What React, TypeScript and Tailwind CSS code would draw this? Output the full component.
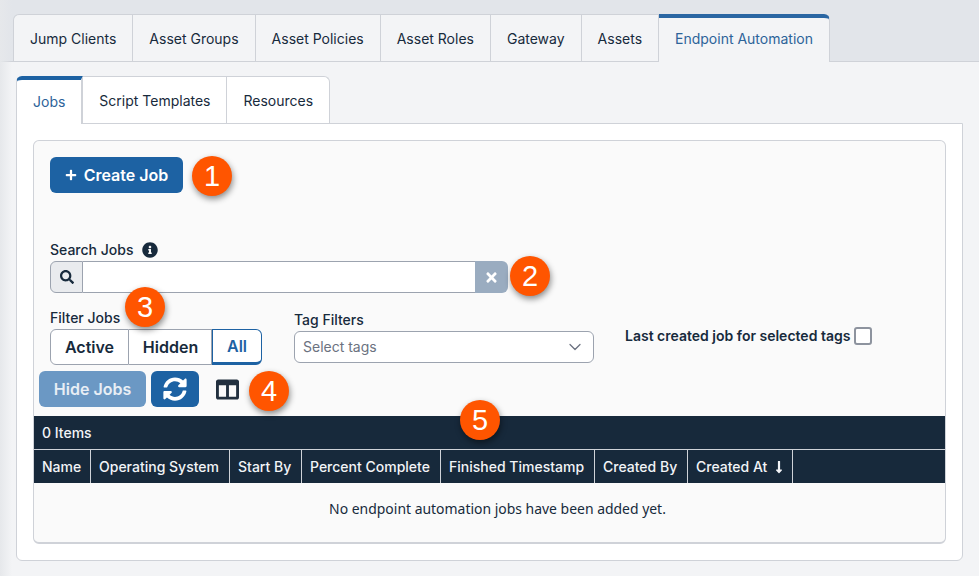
import { ChevronDown } from "lucide-react";
import { FaColumns, FaInfoCircle, FaLongArrowAltDown, FaPlus, FaSearch, FaSyncAlt, FaTimes } from "react-icons/fa";

const TOP_TABS = ["Jump Clients", "Asset Groups", "Asset Policies", "Asset Roles", "Gateway", "Assets"];
const COLUMNS = [
  { label: "Name", width: "w-[57px]" },
  { label: "Operating System", width: "w-[139px]" },
  { label: "Start By", width: "w-[72px]" },
  { label: "Percent Complete", width: "w-[139px]" },
  { label: "Finished Timestamp", width: "w-[154px]" },
  { label: "Created By", width: "w-[93px]" },
];

function Badge({ value, className }: { value: number; className: string }) {
  return (
    <div
      className={`absolute flex h-10 w-10 items-center justify-center rounded-full bg-[#ff5500] text-[29px] leading-none text-white shadow-[1px_3px_6px_rgba(0,0,0,0.45)] ${className}`}
      style={{ fontFamily: '"Liberation Sans", sans-serif' }}
    >
      {value}
    </div>
  );
}

export default function App() {
  return (
    <div
      className="relative h-[576px] w-[979px] overflow-hidden bg-[#f3f4f6] text-[14px] text-[#172a3c]"
      style={{ fontFamily: 'Inter, "Liberation Sans", sans-serif' }}
    >
      <div className="pointer-events-none absolute inset-y-0 left-0 w-[12px] bg-gradient-to-r from-[#e6e8eb] to-transparent" />

      {/* top tabs */}
      <div className="flex h-[62px] items-end border-b border-[#cfd2d8] bg-[#e2e5ea] pl-[13px]">
        <div className="relative flex">
          {TOP_TABS.map((tab, i) => (
            <div
              key={tab}
              className={`flex h-[47px] items-center border-t border-r border-[#cfd2d8] bg-[#f3f4f6] px-4 ${i === 0 ? "rounded-tl-md border-l" : ""}`}
            >
              {tab}
            </div>
          ))}
          <div className="-mb-px flex h-[48px] items-center rounded-tr-md border-r border-t-4 border-r-[#cfd2d8] border-t-[#2a66a3] bg-[#f3f4f6] px-4 pb-[4px] text-[#2d6399]">
            Endpoint Automation
          </div>
        </div>
      </div>

      {/* sub tabs */}
      <div className="relative z-10 ml-4 mt-[14px] flex h-[47px] w-fit">
        <div className="flex h-[48px] items-center rounded-tl-md border-l border-r-2 border-t-4 border-l-[#cfd2d8] border-r-[#cfd2d8] border-t-[#1d62a3] bg-white px-4 pb-[2px] text-[#2d6399]">
          Jobs
        </div>
        <div className="flex h-[47px] items-center border-t border-r border-[#cfd2d8] bg-white pl-4 pr-[15px]">Script Templates</div>
        <div className="flex h-[47px] items-center rounded-tr-md border-t border-r border-[#cfd2d8] bg-white pl-[17px] pr-4">Resources</div>
      </div>

      {/* panel */}
      <div className="ml-4 h-[438px] w-[947px] rounded-b-md border border-[#cfd2d8] bg-white px-4 pt-4">
        <div className="h-[404px] w-[913px] rounded-md border-x border-t border-b-2 border-[#cfd2d8] bg-[#fafafa]">
          <div className="px-4 pt-4">
            <button className="flex h-9 w-[133px] items-center justify-center gap-[7px] rounded-md bg-[#1d62a3] text-[16px] font-semibold text-white">
              <FaPlus className="h-3 w-3" />
              Create Job
            </button>

            <div className="mt-[47px] flex h-5 items-center gap-[9px] pb-px font-medium">
              Search Jobs
              <FaInfoCircle className="h-4 w-4" />
            </div>
            <div className="mt-px flex h-8 w-[458px]">
              <div className="flex w-[33px] items-center justify-center rounded-l-md border border-[#9ca3af] bg-[#e9ebee]">
                <FaSearch className="h-[14px] w-[14px]" />
              </div>
              <div className="flex-1 border-y border-[#9ca3af] bg-white" />
              <div className="flex w-[33px] items-center justify-center rounded-r-md bg-[#9aacc0] text-white">
                <FaTimes className="h-[15px] w-[15px]" />
              </div>
            </div>

            <div className="mt-[15px] flex items-start">
              <div className="w-[212px]">
                <div className="flex h-5 items-center pb-px font-medium">Filter Jobs</div>
                <div className="mt-px flex h-9 text-[16px] font-semibold">
                  <div className="flex w-[79px] items-center justify-center rounded-l-md border border-[#9ca3af] bg-white">Active</div>
                  <div className="flex w-[83px] items-center justify-center border-y border-r border-[#9ca3af] bg-white pl-px">Hidden</div>
                  <div className="flex w-[50px] items-center justify-center rounded-r-md border border-b-[3px] border-[#1d62a3] bg-white text-[#1d62a3]">All</div>
                </div>
              </div>
              <div className="ml-8 mt-[2px] w-[300px]">
                <div className="flex h-5 items-center pb-px font-medium">Tag Filters</div>
                <div className="mt-px flex h-8 items-center justify-between rounded-md border border-[#9ca3af] bg-white pb-px pl-2 pr-[8px] text-[#6b7280]">
                  Select tags
                  <ChevronDown className="h-5 w-5" strokeWidth={1.5} />
                </div>
              </div>
              <div className="ml-[31px] mt-[18px] flex h-5 items-center gap-1 font-semibold">
                <span className="-mt-[2px]">Last created job for selected tags</span>
                <div className="h-[18px] w-[18px] rounded-[3px] border-2 border-[#8d939e] bg-white" />
              </div>
            </div>
          </div>

          <div className="mt-[6px] flex items-center pl-[5px]">
            <button className="flex h-9 w-[107px] items-center justify-center rounded-md bg-[#6b98c4] text-[16px] font-semibold text-[#e8eef5]">
              Hide Jobs
            </button>
            <button className="ml-[5px] flex h-9 w-[48px] items-center justify-center rounded-md bg-[#1d62a3] text-white">
              <FaSyncAlt className="h-6 w-6" />
            </button>
            <FaColumns className="ml-[17px] h-[23px] w-[23px] text-[#22303f]" />
          </div>

          <div className="mt-[9px] bg-[#17293b] font-medium text-[#f2f4f7]">
            <div className="flex h-[34px] items-center border-b border-[#cfd2d8] pb-px pl-2">0 Items</div>
            <div className="flex h-[33px]">
              {COLUMNS.map((col) => (
                <div key={col.label} className={`flex items-center border-r border-[#cfd2d8] pl-2 ${col.width}`}>
                  {col.label}
                </div>
              ))}
              <div className="flex w-[105px] items-center gap-[5px] border-r border-[#cfd2d8] pl-2">
                Created At
                <FaLongArrowAltDown className="h-[14px] w-[14px]" />
              </div>
            </div>
          </div>
          <div className="flex h-[53px] items-center justify-center pl-4 text-[13.95px]" style={{ fontFamily: '"Noto Sans", sans-serif' }}>
            No endpoint automation jobs have been added yet.
          </div>
        </div>
      </div>

      <Badge value={1} className="left-[192px] top-[156px]" />
      <Badge value={2} className="left-[510px] top-[256px]" />
      <Badge value={3} className="left-[125px] top-[287px]" />
      <Badge value={4} className="left-[249px] top-[371px]" />
      <Badge value={5} className="left-[460px] top-[400px]" />
    </div>
  );
}
